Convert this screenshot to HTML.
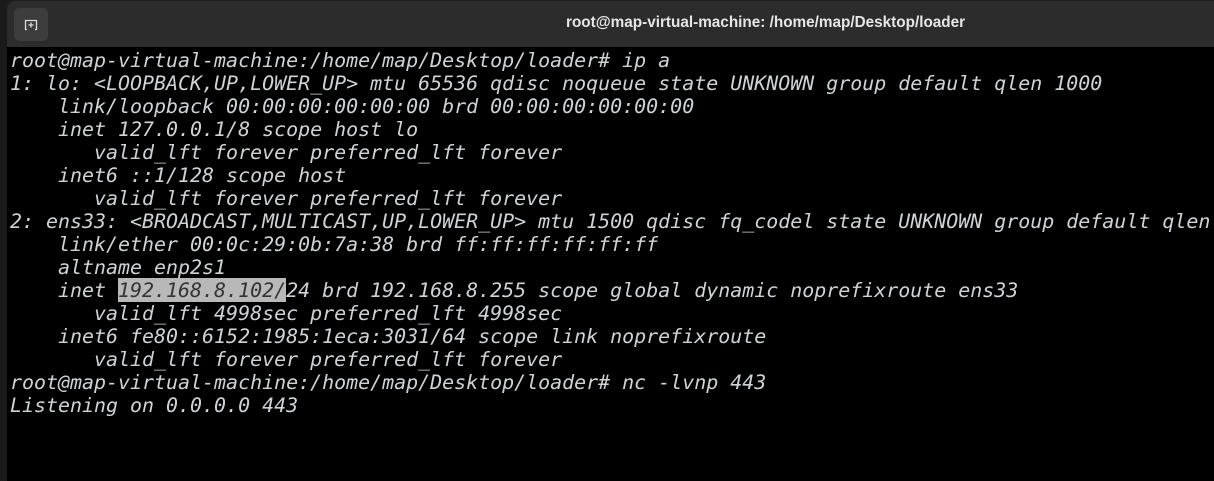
<!DOCTYPE html>
<html><head><meta charset="utf-8"><style>
html,body{margin:0;padding:0;width:1214px;height:479px;overflow:hidden;background:#1c1c1c;}
.strip{position:absolute;left:0;top:0;width:8px;height:479px;background:#1a1a1a;}
.win{position:absolute;left:7px;top:1px;width:1220px;height:480px;background:#000;border-top-left-radius:8px;overflow:hidden;}
.tb{position:absolute;left:0;top:0;right:0;height:46px;background:#2c2c2c;}
.btn{position:absolute;left:7px;top:7px;width:34px;height:33px;background:#3d3d3d;border-radius:5px;}
.title{position:absolute;left:559px;top:13px;font:bold 15.3px "Liberation Sans",sans-serif;color:#e6e6e6;white-space:nowrap;}
pre{position:absolute;left:3px;top:48px;margin:0;font-family:"DejaVu Sans Mono",monospace;font-style:oblique;font-size:19.95px;line-height:23px;color:#cfd3d6;white-space:pre;}
.sel{background:#b8b8b8;color:#333;}
</style></head><body>
<div class="strip"></div>
<div class="win">
<div class="tb"><div class="btn"><svg width="34" height="33" viewBox="0 0 34 33"><path d="M11.5 21.5V12.5h11v9" fill="none" stroke="#ddd" stroke-width="1.3"/><path d="M11 21.5h2M21 21.5h2M17 14.5v5M14.5 17h5" stroke="#ddd" stroke-width="1.3"/></svg></div>
<div class="title">root@map-virtual-machine: /home/map/Desktop/loader</div></div>
<pre>root@map-virtual-machine:/home/map/Desktop/loader# ip a
1: lo: &lt;LOOPBACK,UP,LOWER_UP&gt; mtu 65536 qdisc noqueue state UNKNOWN group default qlen 1000
    link/loopback 00:00:00:00:00:00 brd 00:00:00:00:00:00
    inet 127.0.0.1/8 scope host lo
       valid_lft forever preferred_lft forever
    inet6 ::1/128 scope host
       valid_lft forever preferred_lft forever
2: ens33: &lt;BROADCAST,MULTICAST,UP,LOWER_UP&gt; mtu 1500 qdisc fq_codel state UNKNOWN group default qlen 1000
    link/ether 00:0c:29:0b:7a:38 brd ff:ff:ff:ff:ff:ff
    altname enp2s1
    inet <span class="sel">192.168.8.102/</span>24 brd 192.168.8.255 scope global dynamic noprefixroute ens33
       valid_lft 4998sec preferred_lft 4998sec
    inet6 fe80::6152:1985:1eca:3031/64 scope link noprefixroute
       valid_lft forever preferred_lft forever
root@map-virtual-machine:/home/map/Desktop/loader# nc -lvnp 443
Listening on 0.0.0.0 443
</pre>
</div>
</body></html>
